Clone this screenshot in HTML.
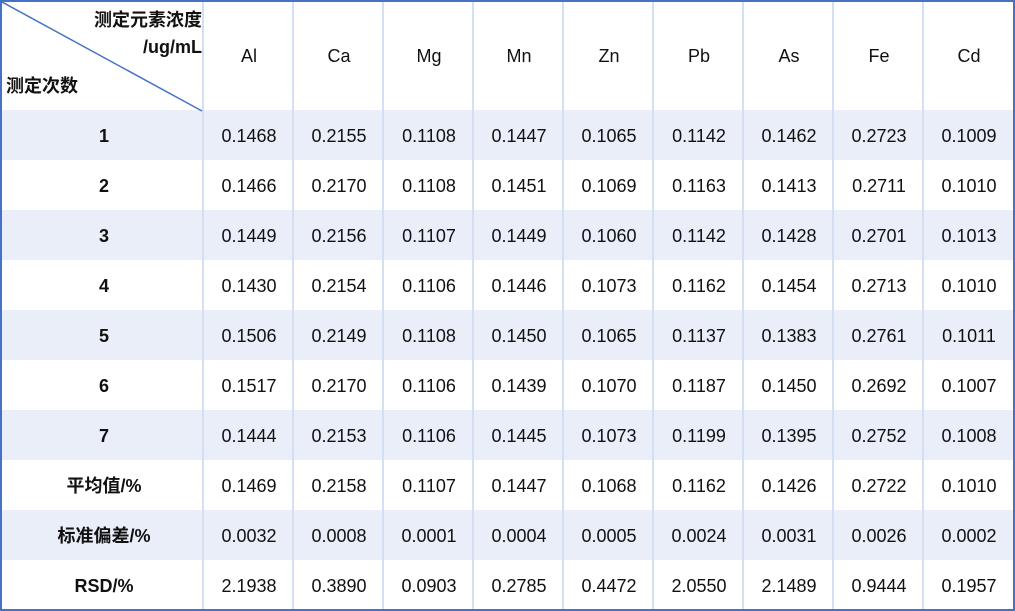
<!DOCTYPE html><html><head><meta charset="utf-8"><style>
body{margin:0;width:1015px;height:611px;background:#fff;overflow:hidden;font-family:"Liberation Sans","Noto Sans CJK SC",sans-serif;}
.wrap{position:absolute;left:0;top:0;width:1011px;height:607px;border:2px solid #4472c4;}
.row{position:absolute;left:0;width:1011px;height:50px;}
.stripe{background:#e9eef8;}
.c{position:absolute;top:1px;height:50px;line-height:50px;width:90px;text-align:center;font-size:18px;color:#111;}
.h{font-weight:bold;width:204px;left:0;font-size:18px;}
.vl{position:absolute;top:0;width:2px;height:607px;background:#d5dff2;}
</style></head><body><div class="wrap">
<div id="rows"></div>
<svg style="position:absolute;left:0;top:0" width="202" height="110"><line x1="0" y1="0" x2="200" y2="109" stroke="#4472c4" stroke-width="1.5"/></svg>
<div style="position:absolute;right:811px;top:5px;font-weight:bold;font-size:18px;text-align:right;line-height:27px;color:#111">测定元素浓度<br>/ug/mL</div>
<div style="position:absolute;left:4px;top:70px;font-weight:bold;font-size:18px;color:#111">测定次数</div>
</div>
<script>
var heads=["Al","Ca","Mg","Mn","Zn","Pb","As","Fe","Cd"];
var lab=["1","2","3","4","5","6","7","平均值/%","标准偏差/%","RSD/%"];
var d=[
"0.1468 0.2155 0.1108 0.1447 0.1065 0.1142 0.1462 0.2723 0.1009",
"0.1466 0.2170 0.1108 0.1451 0.1069 0.1163 0.1413 0.2711 0.1010",
"0.1449 0.2156 0.1107 0.1449 0.1060 0.1142 0.1428 0.2701 0.1013",
"0.1430 0.2154 0.1106 0.1446 0.1073 0.1162 0.1454 0.2713 0.1010",
"0.1506 0.2149 0.1108 0.1450 0.1065 0.1137 0.1383 0.2761 0.1011",
"0.1517 0.2170 0.1106 0.1439 0.1070 0.1187 0.1450 0.2692 0.1007",
"0.1444 0.2153 0.1106 0.1445 0.1073 0.1199 0.1395 0.2752 0.1008",
"0.1469 0.2158 0.1107 0.1447 0.1068 0.1162 0.1426 0.2722 0.1010",
"0.0032 0.0008 0.0001 0.0004 0.0005 0.0024 0.0031 0.0026 0.0002",
"2.1938 0.3890 0.0903 0.2785 0.4472 2.0550 2.1489 0.9444 0.1957"];
var h='<div class="row" style="top:0;height:110px">';
heads.forEach(function(t,i){h+='<div class="c" style="left:'+(202+i*90)+'px;top:-1px;height:110px;line-height:110px">'+t+'</div>';});
h+='</div>';
for(var r=0;r<10;r++){
 h+='<div class="row'+(r%2==0?' stripe':'')+'" style="top:'+(108+r*50)+'px"><div class="c h">'+lab[r]+'</div>';
 d[r].split(' ').forEach(function(t,i){h+='<div class="c" style="left:'+(202+i*90)+'px">'+t+'</div>';});
 h+='</div>';}
for(var i=0;i<9;i++)h+='<div class="vl" style="left:'+(200+i*90)+'px"></div>';
document.getElementById('rows').innerHTML=h;
</script></body></html>
